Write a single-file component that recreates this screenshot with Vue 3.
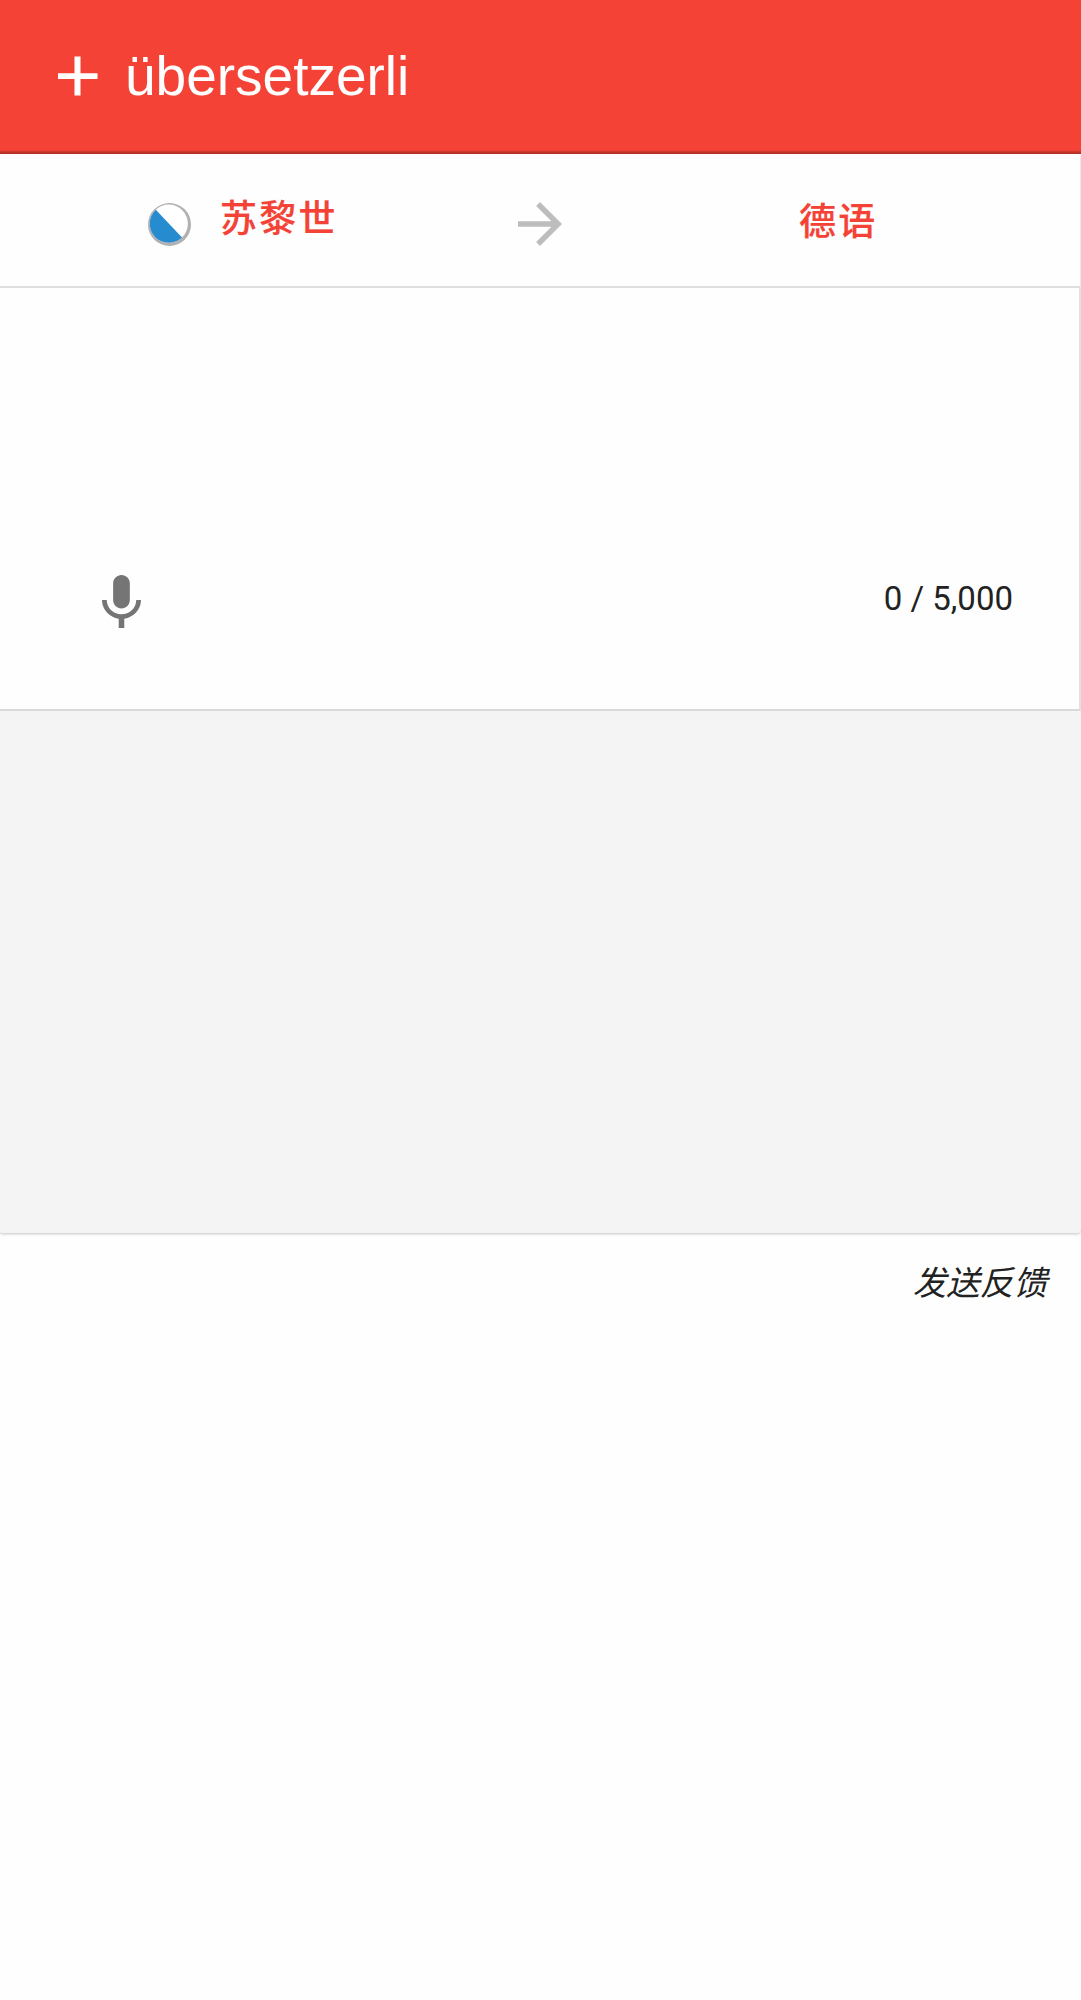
<script setup>
const title = 'übersetzerli'
const source = '苏黎世'
const target = '德语'
const counter = '0 / 5,000'
const feedback = '发送反馈'
</script>

<template>
  <div class="page">
    <header class="header">
      <svg class="plus" viewBox="0 0 40 40"><path d="M17.500 0.500h6v16.800H40.500v5.600H23.500v16.600H17.500V22.900H1v-5.600h16.500z" fill="#fff" /></svg>
      <h1 class="title">{{ title }}</h1>
    </header>
    <main class="card">
      <nav class="languages">
        <svg class="flag" viewBox="0 0 43 43">
          <defs><clipPath id="disc"><circle cx="20.8" cy="20.7" r="19.1" /></clipPath></defs>
          <circle cx="21.5" cy="21.5" r="21.5" fill="#b1b1b1" />
          <circle cx="20.8" cy="20.7" r="19.1" fill="#fff" />
          <path d="M0 -1.500L43 44H0Z" clip-path="url(#disc)" fill="#268bcf" />
        </svg>
        <span class="language source">{{ source }}</span>
        <svg class="arrow" viewBox="4 4 16 16"><path d="M12 4l-1.41 1.41L16.17 11H4v2h12.17l-5.58 5.59L12 20l8-8z" fill="#bdbdbd" /></svg>
        <span class="language target">{{ target }}</span>
      </nav>
      <section class="input">
        <svg class="mic" viewBox="5 2 14 19"><path d="M12 14c1.66 0 2.99-1.34 2.99-3L15 5c0-1.66-1.34-3-3-3S9 3.34 9 5v6c0 1.66 1.34 3 3 3zm5.3-3c0 3-2.54 5.1-5.3 5.1S6.7 14 6.7 11H5c0 3.41 2.72 6.23 6 6.72V21h2v-3.28c3.28-.48 6-3.3 6-6.72h-1.7z" fill="#757575" /></svg>
        <span class="counter">{{ counter }}</span>
      </section>
      <section class="output"></section>
    </main>
    <footer class="footer">{{ feedback }}</footer>
  </div>
</template>

<style>
body { margin: 0; background: #fefefe; }
</style>

<style scoped>
.page {
  width: 1081px;
  height: 2000px;
  overflow: hidden;
  background: #fefefe;
  font-family: Roboto, "Noto Sans CJK SC", sans-serif;
  color: #222;
}
.header {
  box-sizing: border-box;
  height: 154px;
  display: flex;
  align-items: flex-start;
  padding-left: 57px;
  background: linear-gradient(#f44336 0 150px, #e03e33 151px, #c0352b 152px, #b23128 154px);
}
.plus { width: 40px; height: 40px; margin-top: 56px; overflow: visible; }
.title {
  margin: 45px 0 0 28px;
  font: 400 55px/62px "Liberation Sans", Arial, sans-serif;
  color: #fff;
}
.card {
  width: 1080px;
  height: 1079px;
  border-radius: 0 0 2px 2px;
  background: #f4f4f4;
  box-shadow: 0 1px 3px rgba(0, 0, 0, 0.24);
  clip-path: inset(0 -2px -6px 0);
}
.languages {
  box-sizing: border-box;
  height: 134px;
  display: flex;
  align-items: flex-start;
  border-bottom: 2px solid #dfdfdf;
  background: #fefefe;
}
.flag { width: 43px; height: 43px; margin: 49px 0 0 148px; }
.language {
  font-size: 37px;
  line-height: 54px;
  font-weight: 500;
  letter-spacing: 2px;
  color: #f44336;
  -webkit-text-stroke: 0.2px #f44336;
}
.source { width: 296px; margin: 39px 0 0 29px; letter-spacing: 2.3px; }
.arrow { width: 44px; height: 44px; margin: 48px 0 0 2px; }
.target { margin: 42px 0 0 237px; letter-spacing: 2.3px; }
.input {
  box-sizing: border-box;
  width: 1081px;
  height: 423px;
  display: flex;
  justify-content: space-between;
  align-items: flex-start;
  padding: 286px 66px 0 101.5px;
  border-right: 2px solid #e2e2e2;
  border-bottom: 2px solid #d9d9d9;
  background: #fefefe;
}
.mic { width: 39px; height: 53px; margin-top: 0.500px; }
.counter { font-size: 33px; line-height: 40px; margin-top: 5px; }
.output { width: 1081px; height: 519px; background: #f4f4f4; }
.footer {
  margin: 27px 34px 0 0;
  text-align: right;
  font-size: 33.6px;
  line-height: 48px;
  font-style: italic;
}
</style>
